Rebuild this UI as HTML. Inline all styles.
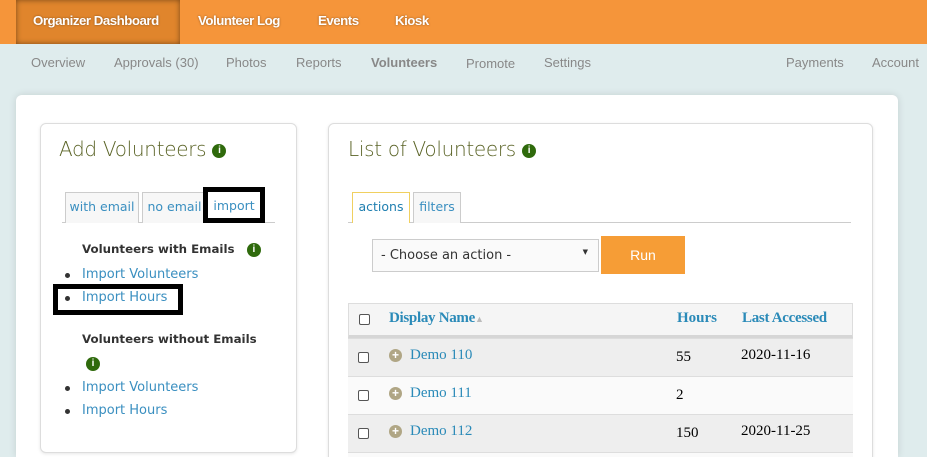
<!DOCTYPE html>
<html style="height:457px;overflow:hidden"><head><style>
*{box-sizing:border-box;margin:0;padding:0}
body{width:927px;height:457px;overflow:hidden;background:#dfeced;font-family:"Liberation Sans",sans-serif;position:relative}
.top{position:absolute;left:0;top:0;width:927px;height:44px;background:#f5953a}
.top span{position:absolute;top:13px;color:#fff;font-weight:bold;font-size:13.3px;letter-spacing:-0.5px;text-shadow:0 0 2px rgba(0,0,0,.4)}
.act{position:absolute;left:16px;top:0;width:164px;height:44px;background:#e0852c;box-shadow:inset 0 0 6px rgba(0,0,0,.45)}
.sub span{position:absolute;top:55px;color:#888;font-size:13px}
.panel{position:absolute;left:16px;top:95px;width:882px;height:362px;background:#fff;border-radius:6px 6px 0 0;box-shadow:0 0 8px rgba(0,0,0,.12)}
.card{position:absolute;background:#fff;border:1px solid #ddd;border-radius:6px;box-shadow:0 1px 3px rgba(0,0,0,.1)}
.h{position:absolute;font-family:"DejaVu Sans",sans-serif;font-weight:200;font-size:20px;color:#5a6326;letter-spacing:-0.3px}
.i{display:inline-block;width:14px;height:14px;border-radius:50%;background:#2f6a0c;color:#fff;font:bold 10px "Liberation Sans";text-align:center;line-height:14px;vertical-align:middle}
.tab{position:absolute;top:192px;height:31px;border:1px solid #ccc;border-bottom:none;background:#f7f7f7;color:#3a8fc0;font-family:"DejaVu Sans",sans-serif;font-size:12.5px;text-align:center;line-height:28px}
.t{position:absolute;font-family:"DejaVu Sans",sans-serif;font-size:13px}
.lnk{color:#3a8fc0}
.b{font-weight:bold;color:#333;font-size:11.8px}
.dot{position:absolute;width:5px;height:5px;border-radius:50%;background:#333}
.row{position:absolute;left:348px;width:505px;height:38px;border-top:1px solid #ddd}
.cb{position:absolute;left:10px;width:11px;height:11px;border:1px solid #555;border-radius:2px;background:#fff}
.ser{font-family:"Liberation Serif",serif;font-size:15px;position:absolute}
.plus{position:absolute;left:41px;width:13px;height:13px;border-radius:50%;background:#b0a685;color:#fff;font:bold 12px "Liberation Sans";line-height:13px;text-align:center}
</style></head><body>
<div class="top"><div class="act"></div>
<span style="left:33px">Organizer Dashboard</span><span style="left:198px">Volunteer Log</span><span style="left:318px">Events</span><span style="left:395px">Kiosk</span></div>
<div class="sub"><span style="left:31px">Overview</span><span style="left:114px">Approvals (30)</span><span style="left:226px">Photos</span><span style="left:296px">Reports</span><span style="left:371px;font-weight:bold">Volunteers</span><span style="left:466px;top:56px">Promote</span><span style="left:544px">Settings</span><span style="left:786px">Payments</span><span style="left:872px">Account</span></div>
<div class="panel"></div>
<div class="card" style="left:40px;top:123px;width:257px;height:330px"></div>
<div class="card" style="left:328px;top:123px;width:545px;height:340px"></div>
<div class="h" style="left:59px;top:137px">Add Volunteers <span class="i">i</span></div>
<div class="h" style="left:348px;top:137px">List of Volunteers <span class="i">i</span></div>
<div style="position:absolute;left:62px;top:222px;width:213px;height:1px;background:#ccc"></div>
<div class="tab" style="left:65px;width:74px">with email</div>
<div class="tab" style="left:142px;width:65px">no email</div>
<div class="tab" style="left:203px;width:62px;top:187px;height:36px;border:5px solid #000;background:#fff;line-height:27px">import</div>
<div class="t b" style="left:82px;top:242px">Volunteers with Emails &nbsp;&nbsp;<span class="i">i</span></div>
<div class="dot" style="left:65px;top:273px"></div><div class="t lnk" style="left:82px;top:267px">Import Volunteers</div>
<div style="position:absolute;left:53px;top:284px;width:130px;height:31px;border:5px solid #000"></div>
<div class="dot" style="left:65px;top:296px"></div><div class="t lnk" style="left:82px;top:290px">Import Hours</div>
<div class="t b" style="left:82px;top:332px">Volunteers without Emails</div>
<div style="position:absolute;left:86px;top:355px"><span class="i">i</span></div>
<div class="dot" style="left:65px;top:386px"></div><div class="t lnk" style="left:82px;top:380px">Import Volunteers</div>
<div class="dot" style="left:65px;top:409px"></div><div class="t lnk" style="left:82px;top:403px">Import Hours</div>

<div style="position:absolute;left:348px;top:222px;width:503px;height:1px;background:#ccc"></div>
<div class="tab" style="left:352px;width:58px;border-color:#f0d060;background:#fff;color:#1f7fb0">actions</div>
<div class="tab" style="left:413px;width:48px">filters</div>
<div style="position:absolute;left:372px;top:239px;width:227px;height:33px;border:1px solid #ccc;background:#fafafa;font-family:'DejaVu Sans',sans-serif;font-size:13px;color:#333;padding:8px 8px">- Choose an action -<span style="position:absolute;right:10px;top:8px;font-size:7px">▼</span></div>
<div style="position:absolute;left:601px;top:236px;width:84px;height:38px;background:#f69d36;color:#fff;font-size:14px;text-align:center;line-height:38px">Run</div>
<div class="row" style="top:303px;height:35px;background:#f5f5f5;border:1px solid #ddd;border-bottom:3px solid #d6d6d6"><div class="cb" style="top:10px"></div>
<span class="ser" style="left:40px;top:6px;color:#2a8ab8;font-weight:bold;letter-spacing:-0.3px">Display Name<span style="color:#bbb;font-size:9px">▲</span></span>
<span class="ser" style="left:328px;top:6px;color:#2a8ab8;font-weight:bold">Hours</span>
<span class="ser" style="left:393px;top:6px;color:#2a8ab8;font-weight:bold;letter-spacing:-0.3px">Last Accessed</span></div>
<div class="row" style="top:338px;background:#eee"><div class="cb" style="top:13px"></div><div class="plus" style="top:10px">+</div><span class="ser" style="left:62px;top:8px;color:#2a8ab8">Demo 110</span><span class="ser" style="left:328px;top:10px">55</span><span class="ser" style="left:393px;top:8px">2020-11-16</span></div>
<div class="row" style="top:376px;background:#fafafa"><div class="cb" style="top:13px"></div><div class="plus" style="top:10px">+</div><span class="ser" style="left:62px;top:8px;color:#2a8ab8">Demo 111</span><span class="ser" style="left:328px;top:10px">2</span></div>
<div class="row" style="top:414px;background:#eee"><div class="cb" style="top:13px"></div><div class="plus" style="top:10px">+</div><span class="ser" style="left:62px;top:8px;color:#2a8ab8">Demo 112</span><span class="ser" style="left:328px;top:10px">150</span><span class="ser" style="left:393px;top:8px">2020-11-25</span></div>
<div class="row" style="top:452px;height:5px;background:#fafafa"></div>
</body></html>
